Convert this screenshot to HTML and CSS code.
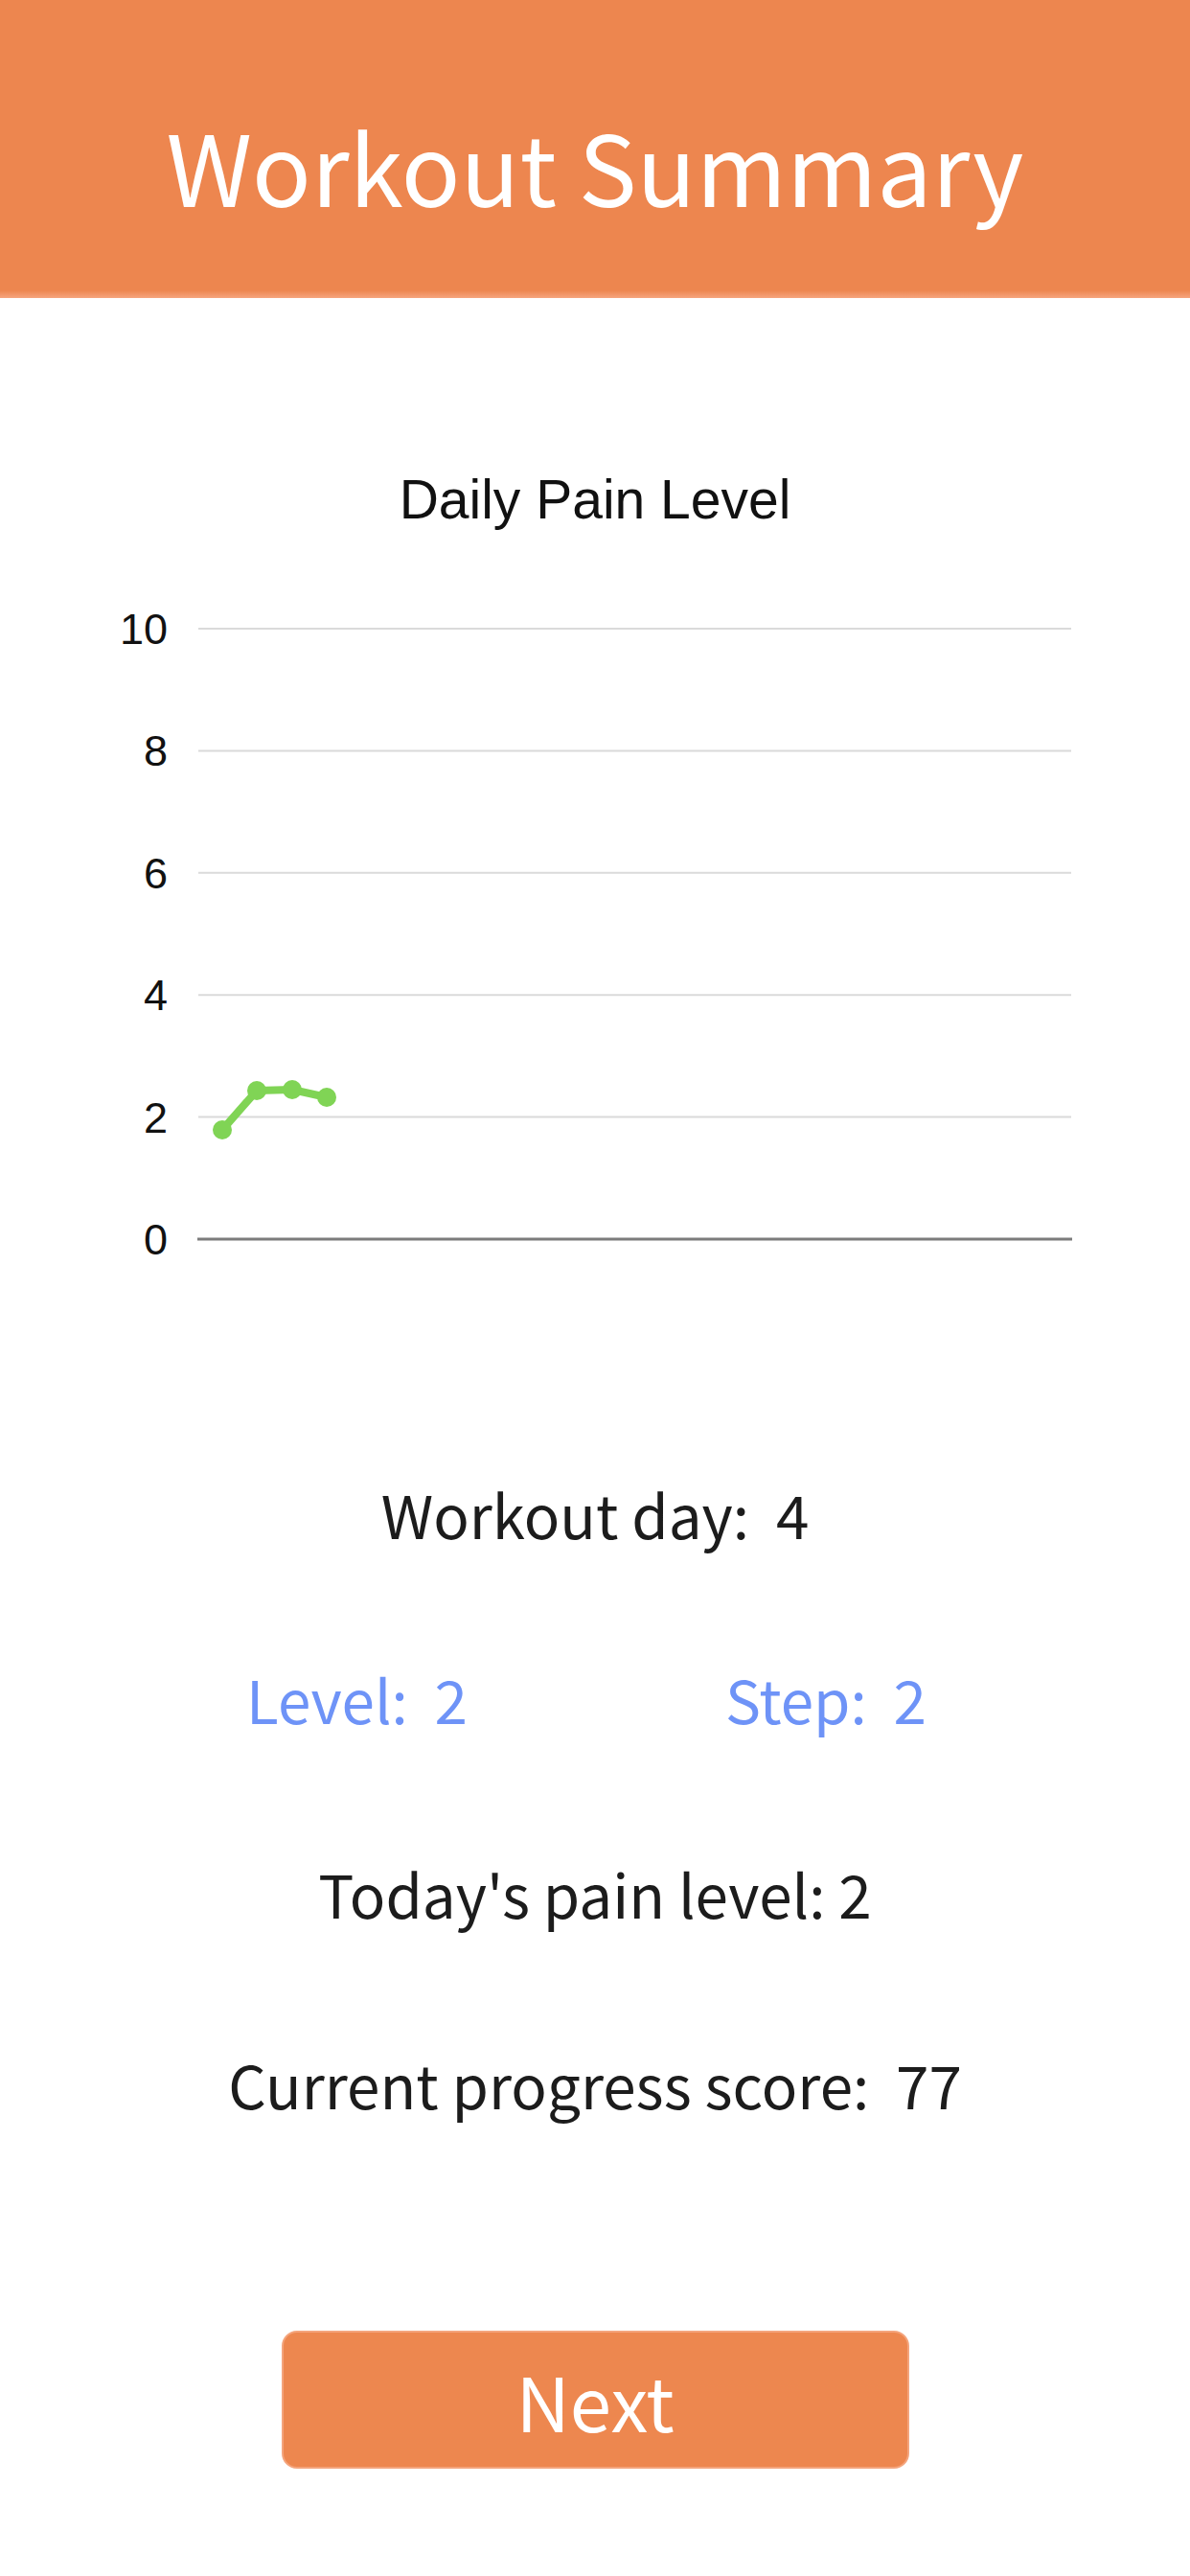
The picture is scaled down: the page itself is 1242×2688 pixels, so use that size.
FILE: index.html
```html
<!DOCTYPE html>
<html lang="en">
<head>
<meta charset="UTF-8">
<meta name="viewport" content="width=device-width, initial-scale=1.0">
<title>Workout Summary</title>
<link rel="stylesheet" href="styles.css">
</head>
<body>

<header class="top-bar">
    <h1>Workout Summary</h1>
</header>

<section class="chart">
    <h2 class="chart-title">Daily Pain Level</h2>
    <svg class="chart-plot" width="1242" height="720" viewBox="0 0 1242 720">
        <g class="grid">
            <line x1="207" y1="36" x2="1118" y2="36"></line>
            <line x1="207" y1="163.4" x2="1118" y2="163.4"></line>
            <line x1="207" y1="290.8" x2="1118" y2="290.8"></line>
            <line x1="207" y1="418.2" x2="1118" y2="418.2"></line>
            <line x1="207" y1="545.6" x2="1118" y2="545.6"></line>
        </g>
        <line class="axis" x1="206" y1="673" x2="1119" y2="673"></line>
        <g class="labels">
            <text x="175" y="52">10</text>
            <text x="175" y="179.4">8</text>
            <text x="175" y="306.8">6</text>
            <text x="175" y="434.2">4</text>
            <text x="175" y="561.6">2</text>
            <text x="175" y="689">0</text>
        </g>
        <polyline class="series" points="232,559 268,518 305,517 341,525"></polyline>
        <g class="dots">
            <circle cx="232" cy="559" r="10"></circle>
            <circle cx="268" cy="518" r="10"></circle>
            <circle cx="305" cy="517" r="10"></circle>
            <circle cx="341" cy="525" r="10"></circle>
        </g>
    </svg>
</section>

<section class="stats">
    <p class="stat day">Workout day:&nbsp; 4</p>
    <div class="stat level-row">
        <span>Level:&nbsp; 2</span>
        <span>Step:&nbsp; 2</span>
    </div>
    <p class="stat pain">Today's pain level: 2</p>
    <p class="stat score">Current progress score:&nbsp; 77</p>
</section>

<button class="next-btn">Next</button>

</body>
</html>
```

FILE: styles.css
```css
body {
    margin: 0;
    padding: 0;
    width: 1242px;
    min-height: 2688px;
    background-color: #FFFFFF;
    font-family: "Noto Sans CJK JP", "Noto Sans", sans-serif;
    color: #1C1C1C;
}
.top-bar {
    box-sizing: border-box;
    height: 311px;
    padding-top: 121px;
    background: linear-gradient(to bottom, #ED864F 0, #ED864F 303px, #F6A57F 311px);
}
.top-bar h1 {
    margin: 0;
    font-size: 102px;
    line-height: 102px;
    font-weight: 400;
    color: #FFFFFF;
    text-align: center;
}
.chart-title {
    margin: 176px 0 0;
    font-family: "Liberation Sans", Arial, sans-serif;
    font-size: 57px;
    line-height: 68px;
    font-weight: 400;
    color: #111111;
    text-align: center;
}
.chart-plot {
    display: block;
    margin-top: 65px;
}
.grid line {
    stroke: #DADADA;
    stroke-width: 2;
}
.axis {
    stroke: #7C7C7C;
    stroke-width: 3;
}
.labels text {
    font-family: "Liberation Sans", Arial, sans-serif;
    font-size: 45px;
    fill: #111111;
    text-anchor: end;
}
.series {
    fill: none;
    stroke: #80D455;
    stroke-width: 8;
    stroke-linejoin: round;
}
.dots circle {
    fill: #80D455;
}
.stats {
    margin-top: 199px;
}
.stat {
    margin: 0;
    font-size: 62px;
    line-height: 80px;
    text-align: center;
}
.level-row {
    display: flex;
    justify-content: center;
    gap: 269px;
    padding-right: 18px;
    margin-top: 113px;
    color: #6E93F7;
}
.pain {
    margin-top: 123px;
}
.score {
    margin-top: 119px;
}
.next-btn {
    display: flex;
    align-items: center;
    justify-content: center;
    box-sizing: border-box;
    width: 655px;
    height: 144px;
    margin: 218px auto 0;
    padding: 0;
    border: 2px solid #F4A47C;
    border-radius: 16px;
    background-color: #ED874F;
    color: #FFFFFF;
    font-family: "Noto Sans CJK JP", "Noto Sans", sans-serif;
    font-size: 78px;
    font-weight: 400;
}
```
